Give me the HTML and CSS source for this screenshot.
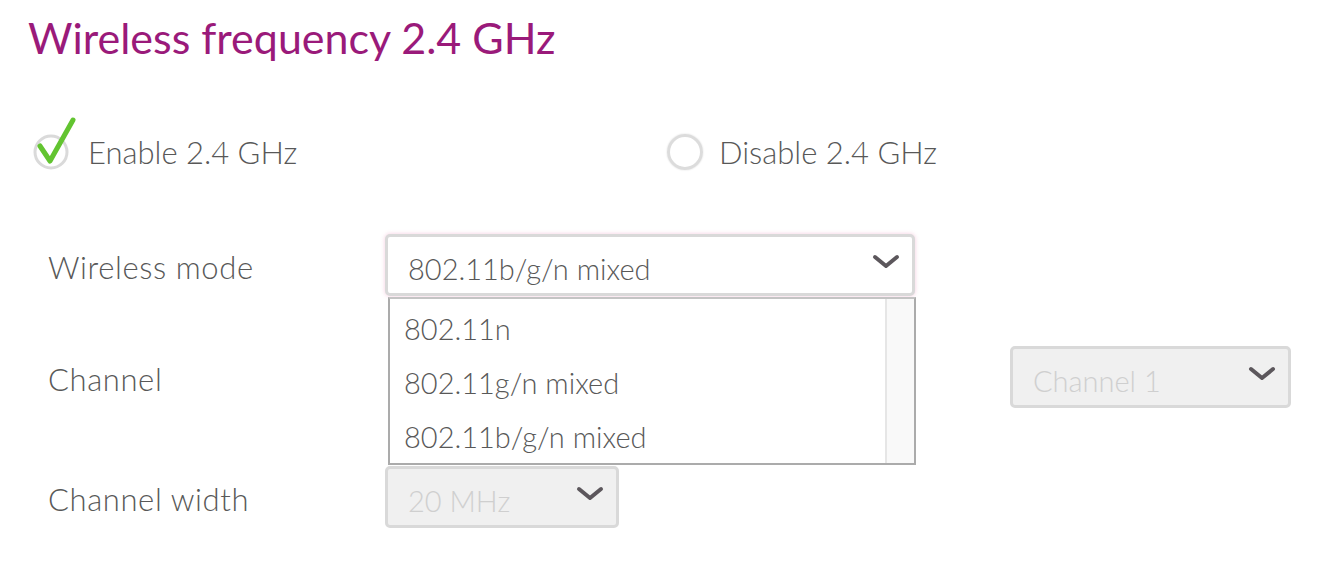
FILE: index.html
```html
<!DOCTYPE html>
<html>
<head>
<meta charset="utf-8">
<link rel="stylesheet" href="styles.css">
</head>
<body>
<div class="page">
  <h1 class="title">Wireless frequency 2.4 GHz</h1>
  <div class="radios">
    <label class="radio checked">
      <svg class="rico" width="50" height="56" viewBox="0 0 50 56">
        <circle cx="21" cy="38" r="16" fill="none" stroke="#dadada" stroke-width="3"/>
        <path d="M10 32 L20 47 L43 6" fill="none" stroke="#62c430" stroke-width="5" stroke-linecap="round" stroke-linejoin="round"/>
      </svg>
      <span>Enable 2.4 GHz</span>
    </label>
    <label class="radio">
      <span class="circle"></span>
      <span>Disable 2.4 GHz</span>
    </label>
  </div>
  <div class="form">
    <div class="row row-mode">
      <div class="label">Wireless mode</div>
      <div class="control">
        <div class="select focus wide">
          <span class="value">802.11b/g/n mixed</span>
          <svg class="chev" width="28" height="16" viewBox="0 0 28 16"><path d="M3 3 L14 12 L25 3" fill="none" stroke="#5c575c" stroke-width="4" stroke-linecap="round" stroke-linejoin="round"/></svg>
        </div>
        <div class="dropdown">
          <ul class="options">
            <li>802.11n</li>
            <li>802.11g/n mixed</li>
            <li>802.11b/g/n mixed</li>
          </ul>
          <div class="scrollbar"></div>
        </div>
      </div>
    </div>
    <div class="row row-channel">
      <div class="label">Channel</div>
      <div class="select disabled channel">
        <span class="value">Channel 1</span>
        <svg class="chev" width="28" height="16" viewBox="0 0 28 16"><path d="M3 3 L14 12 L25 3" fill="none" stroke="#5c575c" stroke-width="4" stroke-linecap="round" stroke-linejoin="round"/></svg>
      </div>
    </div>
    <div class="row row-width">
      <div class="label">Channel width</div>
      <div class="control">
        <div class="select disabled small">
          <span class="value">20 MHz</span>
          <svg class="chev" width="28" height="16" viewBox="0 0 28 16"><path d="M3 3 L14 12 L25 3" fill="none" stroke="#5c575c" stroke-width="4" stroke-linecap="round" stroke-linejoin="round"/></svg>
        </div>
      </div>
    </div>
  </div>
</div>
</body>
</html>
```
FILE: styles.css
```css
* { box-sizing: border-box; }
html, body { margin: 0; padding: 0; background: #fff; }
body {
  font-family: Lato, "Noto Sans", sans-serif;
  font-weight: 300;
  color: #585858;
  width: 1320px;
  height: 574px;
  overflow: hidden;
}
.page { padding: 12px 29px 0 28px; }
.title {
  margin: 0;
  font-weight: 400;
  font-size: 43px;
  line-height: 52px;
  color: #9a1a7a;
}
.radios {
  display: flex;
  align-items: center;
  margin-top: 49px;
  height: 78px;
}
.radio {
  display: flex;
  align-items: center;
  font-size: 31px;
}
.radio.checked { width: 637px; margin-left: 2px; }
.rico { margin-top: -20px; margin-right: 8px; }
.circle {
  width: 36px; height: 36px;
  border-radius: 50%;
  border: 3px solid #dcdcdc;
  box-shadow: 0 0 2px rgba(0,0,0,0.14);
  margin-right: 16px;
}
.form { margin-top: 43px; padding-left: 20px; }
.row { display: flex; align-items: center; }
.label { width: 337px; font-size: 31px; letter-spacing: 0.6px; padding-top: 4px; }
.control { position: relative; }
.select {
  height: 62px;
  border: 3px solid #d9d9d9;
  border-radius: 5px;
  background: #fff;
  display: flex;
  align-items: center;
  justify-content: space-between;
  padding: 0 12px 0 20px;
  font-size: 29px;
}
.select .value { padding-top: 7px; }
.select .chev { margin-top: -6px; }
.select.focus { box-shadow: 0 0 4px rgba(235, 140, 185, 0.45); }
.wide { width: 530px; }
.small { width: 234px; }
.disabled { background: #f0f0f0; }
.disabled .value { color: #cfcfcf; }
.channel { width: 281px; margin-left: auto; }
.row-channel { margin-top: 50px; }
.row-width { margin-top: 58px; }
.dropdown {
  position: absolute;
  left: 3px;
  top: 63px;
  width: 528px;
  height: 168px;
  border: 2px solid #ababab;
  border-top-color: #c4c4c4;
  background: #fff;
  display: flex;
  z-index: 5;
}
.options {
  list-style: none;
  margin: 0;
  padding: 3px 0 0 14px;
  flex: 1;
  font-size: 29px;
}
.options li { height: 54px; line-height: 54px; }
.scrollbar {
  width: 29px;
  background: #f9f9f9;
  border-left: 2px solid #e6e6e6;
}
```
